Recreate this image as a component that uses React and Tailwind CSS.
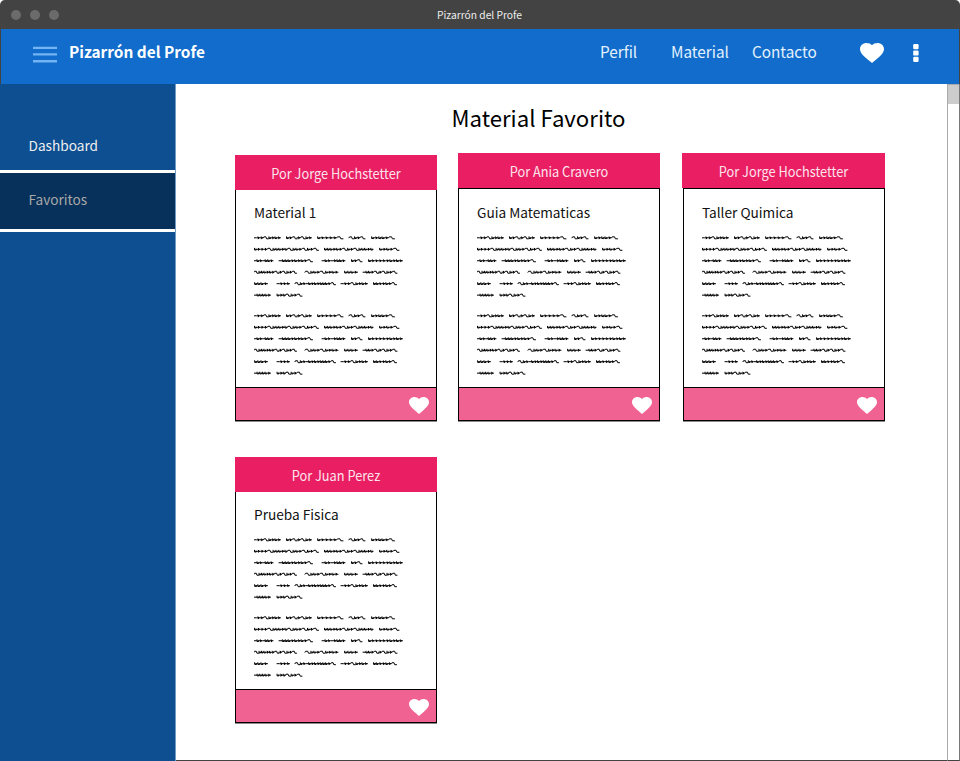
import React from 'react';

const CARDS = [
  { author: 'Por Jorge Hochstetter', title: 'Material 1', place: 'ml-[59px] mt-[18px]', head: 'w-[202px]', body: 'border-t-0', sheet: 'h-[197px] pt-[11px]' },
  { author: 'Por Ania Cravero', title: 'Guia Matematicas', place: 'ml-[21px] mt-[16px]', head: 'w-[202px]', body: 'border-t', sheet: 'h-[198px] pt-[12px]' },
  { author: 'Por Jorge Hochstetter', title: 'Taller Quimica', place: 'ml-[22px] mt-[16px]', head: 'w-[203px]', body: 'border-t ml-px', sheet: 'h-[198px] pt-[12px]' },
  { author: 'Por Juan Perez', title: 'Prueba Fisica', place: 'ml-[59px] mt-[36px]', head: 'w-[202px]', body: 'border-t-0', sheet: 'h-[197px] pt-[11px]' },
];

// Each word is [start, width, strokes]; e = tick, l = short loop, z = falling wave, - = flat lead-in.
const SCRIBBLE = [
  [[0, 27, '-eezlele'], [32, 26, 'lezezle'], [63, 26.5, 'leeeez'], [95, 16.5, 'zlez'], [117, 24, 'lellez']],
  [[0, 65, 'leeezlllelzllezlez'], [70, 49.5, 'lllelezlezlllel'], [125, 20.5, 'lelez']],
  [[0, 19.5, '-le-lle'], [25, 34, '-lllelelez'], [68, 23.5, '-le-elle'], [97, 11.5, 'lez'], [114, 35, 'leeeeelele']],
  [[0, 43, 'zlllelezezlez'], [51, 33.5, 'zllezlele'], [90, 14, 'llle'], [109, 34.5, '-llezezlez']],
  [[0, 14, 'llle'], [23, 13, '-eee'], [41, 41, 'zle-lelelllez'], [87, 27, '-eezlele'], [119, 24, 'lleelez']],
  [[0, 17, '-lllle'], [22.5, 26, 'lelzlez']],
];
const WIDTHS = { e: 3.6, l: 2.9, z: 5.4, '-': 2.8 };

function wordPath(x, width, word, y) {
  const total = [...word].reduce((sum, c) => sum + WIDTHS[c], 0);
  const k = width / total;
  let d = `M${x} ${y}`;
  for (const c of word) {
    const w = WIDTHS[c] * k;
    const p = (fx, fy) => `${(x + w * fx).toFixed(2)} ${(y + fy).toFixed(2)}`;
    if (c === '-') d += `L${p(1, 0)}`;
    if (c === 'e') d += `L${p(0.6, 0)}M${p(0.45, -1)}L${p(0.65, 0)}L${p(0.5, 1)}M${p(0.5, 0)}L${p(1, 0)}`;
    if (c === 'l') d += `M${p(0.2, -1)}L${p(0.2, 0.7)}L${p(0.8, 0.8)}L${p(0.9, 0)}L${p(0.5, 0)}M${p(0.9, 0)}L${p(1, 0)}`;
    if (c === 'z') d += `L${p(0.1, -0.9)}L${p(0.5, -1)}L${p(0.65, 1)}L${p(1, 1)}M${p(1, 0)}`;
    x += w;
  }
  return d;
}

const SCRIBBLE_PATH = SCRIBBLE.map((row, i) =>
  row.map(([x, w, s]) => wordPath(x, w - 0.5, s, 2.8 + i * 11.47)).join('')
).join('');

function Scribble() {
  return (
    <svg width="150" height="66" viewBox="0 0 150 66" className="block" aria-hidden="true">
      <path d={SCRIBBLE_PATH} fill="none" stroke="#000" strokeWidth="1" strokeLinejoin="round" strokeLinecap="round" />
    </svg>
  );
}

function Heart({ className }) {
  return (
    <svg viewBox="2 3 20 18.35" preserveAspectRatio="none" fill="white" className={className} aria-hidden="true">
      <path d="M12 21.35l-1.45-1.32C5.4 15.36 2 12.28 2 8.5 2 5.42 4.42 3 7.5 3c1.74 0 3.41.81 4.5 2.09C13.09 3.81 14.76 3 16.5 3 19.58 3 22 5.42 22 8.5c0 3.78-3.4 6.86-8.55 11.54L12 21.35z" />
    </svg>
  );
}

function Card({ author, title, place, head, body, sheet }) {
  return (
    <article className={`shrink-0 ${place}`}>
      <header className={`h-[35px] bg-[#ea1e63] pt-[7px] text-center text-[14px] leading-[22px] text-[#fce4ec] ${head}`}>
        <span className="block scale-x-[0.912]">{author}</span>
      </header>
      <div className={`w-[202px] border border-black bg-white shadow-[0_1px_#8a8a8a] ${body}`}>
        <div className={`pl-[18px] ${sheet}`}>
          <h2 className="h-[34px] text-[13.65px] leading-[22px] text-[#111]">{title}</h2>
          <Scribble />
          <div className="h-[12px]" />
          <Scribble />
        </div>
        <footer className="flex h-[33px] items-center justify-end border-t border-black bg-[#f06292] pt-[2px] pr-[7.5px]">
          <Heart className="h-[17px] w-[20px]" />
        </footer>
      </div>
    </article>
  );
}

export default function App() {
  return (
    <div className="bg-white font-['Noto_Sans_CJK_SC','Noto_Sans',sans-serif]">
      <div className="flex h-[761px] w-[960px] flex-col overflow-hidden rounded-t-[5px] bg-[#434343]">
        <div className="flex h-[29px] items-center">
          <div className="flex w-[437px] gap-[9px] pl-[11px]">
            <span className="size-[10px] rounded-full bg-[#6b6b6b]" />
            <span className="size-[10px] rounded-full bg-[#6b6b6b]" />
            <span className="size-[10px] rounded-full bg-[#6b6b6b]" />
          </div>
          <span className="text-[10.25px] leading-[20px] whitespace-nowrap text-[#eee]">Pizarrón del Profe</span>
        </div>
        <header className="mx-px flex h-[55px] items-start bg-[#116ccb] pt-[10px] text-white">
          <svg width="24" height="18" viewBox="0 0 24 18" fill="#72b4f4" className="ml-[32px] mt-[6px]" aria-hidden="true">
            <path d="M0 1.7h24v2.4H0zM0 8.2h24v2.3H0zM0 15h24v2.4H0z" />
          </svg>
          <span className="ml-[12px] w-[531px] text-[15.4px] leading-[25px] font-bold">Pizarrón del Profe</span>
          <nav className="flex text-[15.3px] leading-[25px] text-[#e3f2fd]">
            <span className="w-[71px]">Perfil</span>
            <span className="w-[81px]">Material</span>
            <span className="w-[108px]">Contacto</span>
          </nav>
          <Heart className="mt-[4px] h-[20px] w-[24px]" />
          <svg width="6" height="18" viewBox="0 0 6 18" fill="white" className="ml-[29px] mt-[5px]" aria-hidden="true">
            <rect x="0.2" y="0" width="5.4" height="5.2" rx="1.2" />
            <rect x="0.2" y="6.4" width="5.4" height="5.2" rx="1.2" />
            <rect x="0.2" y="12.8" width="5.4" height="5.2" rx="1.2" />
          </svg>
        </header>
        <div className="flex h-[677px]">
          <aside className="w-[176px] shrink-0 border-r border-[#6f9bc4] bg-[#0d4f91] text-[13.65px] leading-[22px]">
            <div className="h-[86px] pl-[28.5px] pt-[50px] text-[#eee]">Dashboard</div>
            <div className="h-[62px] border-y-[3px] border-white bg-[#07315a] pl-[28.5px] pt-[15px] text-[#a8a8a8]">Favoritos</div>
          </aside>
          <main className="w-[771px] border-b border-[#434343] bg-white">
            <h1 className="h-[53px] pl-[275.5px] pt-[17px] text-[22.2px] leading-[32px] text-black">Material Favorito</h1>
            <div className="flex flex-wrap items-start">
              {CARDS.map((card) => (
                <Card key={card.title} {...card} />
              ))}
            </div>
          </main>
          <div className="w-[13px] border-r border-b border-l border-r-[#777] border-b-[#434343] border-l-[#aaa] bg-white">
            <div className="h-[20px] border-t border-[#aaa] bg-[#ccc]" />
          </div>
        </div>
      </div>
    </div>
  );
}
